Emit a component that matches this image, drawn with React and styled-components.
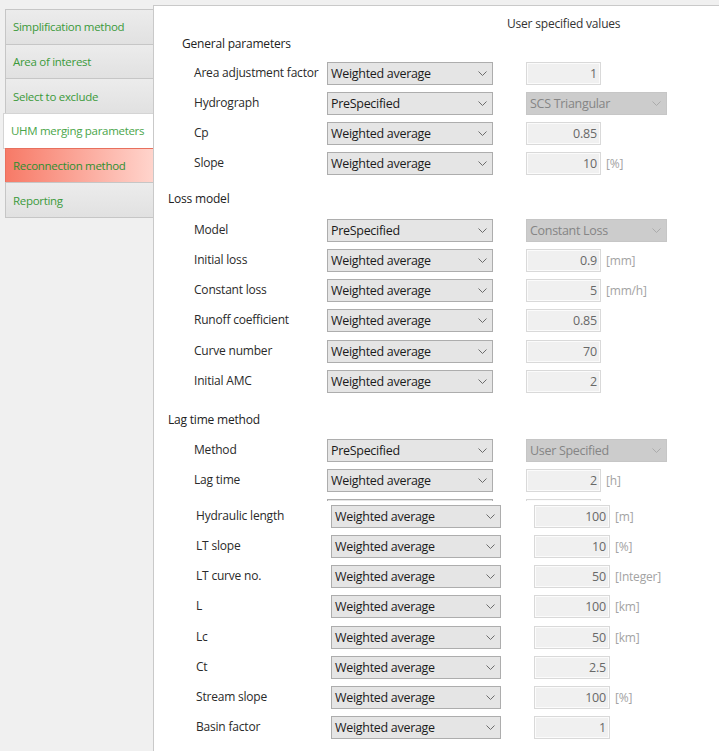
import React from "react"
import styled, { createGlobalStyle, css } from "styled-components"

const GlobalStyle = createGlobalStyle`
  html, body {
    margin: 0;
    padding: 0;
  }
  body {
    background: #f0f0f0;
    font-family: "Open Sans", "Noto Sans", sans-serif;
    font-size: 12px;
    letter-spacing: -0.2px;
    color: #222;
  }
`;

// column geometry for the two parameter blocks
const upperLayout = { pad: 40, label: 133, combo: 166, gap: 33, field: 75, list: 141 };
const lowerLayout = { pad: 42, label: 135, combo: 170, gap: 33, field: 76, list: 141 };

const Shell = styled.div`
  display: flex;
  min-height: 751px;
`;

const Sidebar = styled.nav`
  width: 153px;
  flex-shrink: 0;
  padding-top: 10px;
  display: flex;
  flex-direction: column;
`;

const Tab = styled.div`
  box-sizing: border-box;
  height: 35.7px;
  margin-left: 5px;
  margin-top: -1px;
  padding-left: 7px;
  display: flex;
  align-items: center;
  border: 1px solid #c6c6c6;
  border-right: none;
  background: linear-gradient(#ececec, #e1e1e1);
  color: #3b9a3b;
  font-size: 11.5px;
  letter-spacing: -0.3px;
  white-space: nowrap;

  ${p => p.$active && css`
    margin-left: 3px;
    padding-left: 7px;
    background: #fff;
    border-color: #d4d4d4;
    color: #4aa54a;
  `}

  ${p => p.$alert && css`
    background: linear-gradient(to right, #f77a67, #ffd4cc);
    border-color: #e8705e;
    color: #2f8f2f;
  `}
`;

const Panel = styled.main`
  flex: 1;
  margin-top: 5px;
  background: #fff;
  border-top: 1px solid #c9c9c9;
  border-left: 1px solid #c9c9c9;
  display: flex;
  flex-direction: column;
`;

const UpperBlock = styled.section`
  height: 495px;
  overflow: hidden;
`;

const LowerBlock = styled.section`
  padding-top: 0;
`;

const Caption = styled.div`
  margin-top: 10px;
  padding-left: 353px;
  line-height: 16px;
  color: #333;
`;

const SectionTitle = styled.div`
  line-height: 16px;
  padding-left: ${p => p.$indent}px;
  margin-top: ${p => p.$top}px;
  margin-bottom: ${p => p.$bottom}px;
  color: #222;
`;

const Row = styled.div`
  height: 30.25px;
  display: flex;
  align-items: center;
  padding-left: ${p => p.$lay.pad}px;
`;

const Label = styled.div`
  width: ${p => p.$lay.label}px;
  flex-shrink: 0;
  margin-top: -2px;
  color: #2a2a2a;
  white-space: nowrap;
`;

const Combo = styled.div`
  box-sizing: border-box;
  width: ${p => p.$w}px;
  height: 23px;
  flex-shrink: 0;
  display: flex;
  align-items: center;
  justify-content: space-between;
  padding: 0 5px 0 3px;
  background: #e5e5e5;
  border: 1px solid #adadad;
  color: #1b1b1b;
  font-size: 12.5px;
  letter-spacing: -0.3px;
  white-space: nowrap;

  svg {
    stroke: #6c6c6c;
  }

  ${p => p.$disabled && css`
    background: #cccccc;
    border-color: #c6c6c6;
    color: #858585;
    svg {
      stroke: #ababab;
    }
  `}
`;

const Spacer = styled.div`
  width: ${p => p.$w}px;
  flex-shrink: 0;
`;

const Field = styled.div`
  box-sizing: border-box;
  width: ${p => p.$w}px;
  height: 23px;
  flex-shrink: 0;
  display: flex;
  align-items: center;
  justify-content: flex-end;
  padding-right: 3px;
  background: #f0f0f0;
  border: 1px solid #d9d9d9;
  box-shadow: inset 0 0 0 1px #fbfbfb;
  color: #686868;
  font-size: 12.5px;
  letter-spacing: -0.2px;
`;

const Unit = styled.span`
  margin-left: 5px;
  color: #a3a3a3;
  font-size: 12px;
`;

const Chevron = () => (
  <svg width="9" height="5" viewBox="0 0 9 5" fill="none" strokeWidth="1">
    <path d="M0.5 0.5 L4.5 4.5 L8.5 0.5" />
  </svg>
);

const tabs = [
  { name: "Simplification method" },
  { name: "Area of interest" },
  { name: "Select to exclude" },
  { name: "UHM merging parameters", active: true },
  { name: "Reconnection method", alert: true },
  { name: "Reporting" },
];

const general = [
  { label: "Area adjustment factor", mode: "Weighted average", value: "1" },
  { label: "Hydrograph", mode: "PreSpecified", list: "SCS Triangular" },
  { label: "Cp", mode: "Weighted average", value: "0.85" },
  { label: "Slope", mode: "Weighted average", value: "10", unit: "[%]" },
];

const loss = [
  { label: "Model", mode: "PreSpecified", list: "Constant Loss" },
  { label: "Initial loss", mode: "Weighted average", value: "0.9", unit: "[mm]" },
  { label: "Constant loss", mode: "Weighted average", value: "5", unit: "[mm/h]" },
  { label: "Runoff coefficient", mode: "Weighted average", value: "0.85" },
  { label: "Curve number", mode: "Weighted average", value: "70" },
  { label: "Initial AMC", mode: "Weighted average", value: "2" },
];

// last entry is the row cut off by the scroll edge: only its top edge shows
const lag = [
  { label: "Method", mode: "PreSpecified", list: "User Specified" },
  { label: "Lag time", mode: "Weighted average", value: "2", unit: "[h]" },
  { label: "", mode: "", value: "" },
];

const lagDetails = [
  { label: "Hydraulic length", mode: "Weighted average", value: "100", unit: "[m]" },
  { label: "LT slope", mode: "Weighted average", value: "10", unit: "[%]" },
  { label: "LT curve no.", mode: "Weighted average", value: "50", unit: "[Integer]" },
  { label: "L", mode: "Weighted average", value: "100", unit: "[km]" },
  { label: "Lc", mode: "Weighted average", value: "50", unit: "[km]" },
  { label: "Ct", mode: "Weighted average", value: "2.5" },
  { label: "Stream slope", mode: "Weighted average", value: "100", unit: "[%]" },
  { label: "Basin factor", mode: "Weighted average", value: "1" },
];

function ParamRow({ item, lay }) {
  return (
    <Row $lay={lay}>
      <Label $lay={lay}>{item.label}</Label>
      <Combo $w={lay.combo}>
        <span>{item.mode}</span>
        <Chevron />
      </Combo>
      <Spacer $w={lay.gap} />
      {item.list ? (
        <Combo $w={lay.list} $disabled>
          <span>{item.list}</span>
          <Chevron />
        </Combo>
      ) : (
        <>
          <Field $w={lay.field}>{item.value}</Field>
          {item.unit && <Unit>{item.unit}</Unit>}
        </>
      )}
    </Row>
  );
}

export default function App() {
  return (
    <>
      <GlobalStyle />
      <Shell>
        <Sidebar>
          {tabs.map(t => (
            <Tab key={t.name} $active={t.active} $alert={t.alert}>{t.name}</Tab>
          ))}
        </Sidebar>
        <Panel>
          <UpperBlock>
            <Caption>User specified values</Caption>
            <SectionTitle $indent={28} $top={4} $bottom={6}>General parameters</SectionTitle>
            {general.map(it => <ParamRow key={it.label} item={it} lay={upperLayout} />)}
            <SectionTitle $indent={14} $top={12} $bottom={8}>Loss model</SectionTitle>
            {loss.map(it => <ParamRow key={it.label} item={it} lay={upperLayout} />)}
            <SectionTitle $indent={14} $top={15.5} $bottom={7}>Lag time method</SectionTitle>
            {lag.map((it, i) => <ParamRow key={i} item={it} lay={upperLayout} />)}
          </UpperBlock>
          <LowerBlock>
            {lagDetails.map(it => <ParamRow key={it.label} item={it} lay={lowerLayout} />)}
          </LowerBlock>
        </Panel>
      </Shell>
    </>
  );
}
